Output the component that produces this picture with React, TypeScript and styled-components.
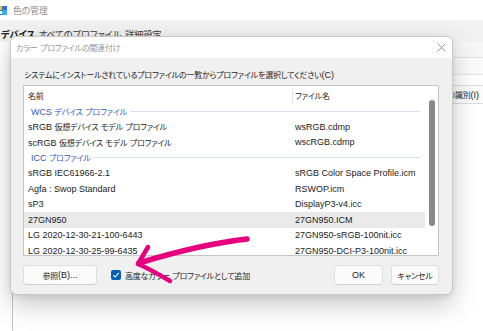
import * as React from 'react';
import styled, { createGlobalStyle } from 'styled-components';

const GlobalStyle = createGlobalStyle`
  html, body {
    margin: 0;
    padding: 0;
  }
  body {
    width: 483px;
    height: 331px;
    overflow: hidden;
    background: #ffffff;
    font-family: "Liberation Sans", "Noto Sans CJK JP", sans-serif;
    font-size: 9px;
    color: #1b1b1b;
  }
`;

interface Row {
  name: string;
  file?: string;
  group?: boolean;
  selected?: boolean;
}

const rows: Row[] = [
  { name: 'WCS デバイス プロファイル', group: true },
  { name: 'sRGB 仮想デバイス モデル プロファイル', file: 'wsRGB.cdmp' },
  { name: 'scRGB 仮想デバイス モデル プロファイル', file: 'wscRGB.cdmp' },
  { name: 'ICC プロファイル', group: true },
  { name: 'sRGB IEC61966-2.1', file: 'sRGB Color Space Profile.icm' },
  { name: 'Agfa : Swop Standard', file: 'RSWOP.icm' },
  { name: 'sP3', file: 'DisplayP3-v4.icc' },
  { name: '27GN950', file: '27GN950.ICM', selected: true },
  { name: 'LG 2020-12-30-21-100-6443', file: '27GN950-sRGB-100nit.icc' },
  { name: 'LG 2020-12-30-25-99-6435', file: '27GN950-DCI-P3-100nit.icc' }
];

// japanese runs are set a little smaller/tighter than latin, like Yu Gothic UI
const Cjk = styled('span')`
  font-family: "Noto Sans CJK JP", sans-serif;
  font-size: 0.89em;
  letter-spacing: -0.025em;
  font-feature-settings: "palt";
`;

const CJK_RE = /([\u3000-\u30ff\u3400-\u9fff\uff00-\uffef]+)/;

const T = ({ children }: { children: string }) => (
  <>{children.split(CJK_RE).map((part, i) => (i % 2 ? <Cjk key={i}>{part}</Cjk> : part))}</>
);

const Screen = styled('div')`
  position: relative;
  width: 483px;
  height: 331px;
  overflow: hidden;
  background: #ffffff;
`;

// background window
const TitleBar = styled('div')`
  height: 20px;
  display: flex;
  align-items: center;
  gap: 6px;
  font-size: 10px;
  color: #8d8d8d;
`;

const TabStrip = styled('div')`
  height: 22px;
  display: flex;
  align-items: flex-end;
  background: #f1f1f1;
`;

const Tab = styled('div')<{ active?: boolean }>`
  height: 12px;
  line-height: 12px;
  padding: 0 3px 2px 1px;
  font-size: 10.5px;
  font-weight: ${p => (p.active ? 700 : 400)};
  color: ${p => (p.active ? '#1b1b1b' : '#3a3a3a')};
`;

const Panel = styled('div')`
  margin-left: 12px;
  height: 289px;
  border-left: 1px solid #c4c4c4;
  background: #ffffff;
  display: flex;
  flex-direction: column;
`;

const PanelBand = styled('div')<{ tone: string; h: number }>`
  height: ${p => p.h}px;
  background: ${p => p.tone};
  border-bottom: 1px solid #e3e3e3;
`;

const PanelButtonRow = styled('div')`
  margin-top: 10px;
  display: flex;
  justify-content: flex-end;
  margin-right: -3px;
`;

const PanelButton = styled('div')`
  height: 17px;
  padding: 0 6px;
  display: flex;
  align-items: center;
  background: #fbfbfb;
  border: 1px solid #dcdcdc;
  border-radius: 3px;
  white-space: nowrap;
`;

// dialog
const Dialog = styled('div')`
  position: absolute;
  left: 10px;
  top: 36px;
  width: 443px;
  height: 259px;
  box-sizing: border-box;
  border: 1px solid #c8c8c8;
  border-radius: 7px;
  overflow: hidden;
  background: #f0f0f0;
  box-shadow: 0 10px 26px rgba(0, 0, 0, 0.22), 0 2px 6px rgba(0, 0, 0, 0.08);
  display: flex;
  flex-direction: column;
`;

const DialogTitle = styled('div')`
  height: 21px;
  flex: none;
  background: #ffffff;
  display: flex;
  align-items: center;
  justify-content: space-between;
  padding: 0 6px 0 5px;
  color: #959595;
`;

const DialogBody = styled('div')`
  flex: 1;
  display: flex;
  flex-direction: column;
  padding: 11px 13px 8px 12px;
`;

const Label = styled('div')`
  height: 12px;
  line-height: 12px;
  padding-left: 1px;
  white-space: nowrap;
`;

const ListBox = styled('div')`
  margin-top: 4px;
  height: 171px;
  box-sizing: border-box;
  border: 1px solid #c6c6c6;
  background: #ffffff;
  display: flex;
  overflow: hidden;
`;

const ListContent = styled('div')`
  flex: 1;
  display: flex;
  flex-direction: column;
  padding-top: 2px;
`;

const ListRow = styled('div')<{ selected?: boolean }>`
  flex: none;
  height: 15.5px;
  display: flex;
  align-items: center;
  white-space: nowrap;
  background: ${p => (p.selected ? '#eaeaea' : 'transparent')};
`;

const NameCell = styled('div')`
  width: 264px;
  padding-left: 4px;
  flex: none;
`;

const FileCell = styled('div')<{ header?: boolean }>`
  flex: 1;
  padding-left: 2px;
  align-self: stretch;
  display: flex;
  align-items: center;
  border-left: 1px solid ${p => (p.header ? '#e5e5e5' : 'transparent')};
`;

const GroupRow = styled('div')`
  flex: none;
  height: 15.5px;
  display: flex;
  align-items: center;
  gap: 3px;
  padding: 0 5px 0 7px;
  color: #2f5bc0;
  white-space: nowrap;
`;

const GroupLine = styled('div')`
  flex: 1;
  height: 1px;
  background: #d3e0f4;
`;

const ScrollTrack = styled('div')`
  width: 13px;
  flex: none;
  padding-top: 14px;
  display: flex;
  justify-content: center;
`;

const ScrollThumb = styled('div')`
  width: 6px;
  height: 126px;
  border-radius: 3px;
  background: #8a8a8a;
`;

const Footer = styled('div')`
  margin-top: 9px;
  display: flex;
  align-items: center;
`;

const Button = styled('div')<{ w: number }>`
  width: ${p => p.w}px;
  height: 20px;
  box-sizing: border-box;
  border: 1px solid #dedede;
  border-bottom-color: #cfcfcf;
  border-radius: 4px;
  background: #fbfbfb;
  display: flex;
  align-items: center;
  justify-content: center;
`;

const CheckWrap = styled('label')`
  margin-left: 14px;
  display: flex;
  align-items: center;
  gap: 4px;
  flex: 1;
`;

const Check = styled('span')`
  width: 10px;
  height: 10px;
  border-radius: 2px;
  background: #005fb8;
  display: flex;
  align-items: center;
  justify-content: center;
`;

const ButtonGroup = styled('div')`
  display: flex;
  gap: 8px;
`;

const Overlay = styled('svg')`
  position: absolute;
  left: 0;
  top: 0;
  pointer-events: none;
`;

const AppIcon = () => (
  <svg width="10" height="11" viewBox="0 0 10 11" style={{ marginLeft: -3 }}>
    <rect x="0" y="1" width="10" height="9" fill="#2f6fd6" />
    <rect x="0" y="1" width="5" height="4" fill="#f1c232" />
    <rect x="5" y="5" width="5" height="5" fill="#3bb0e8" />
    <rect x="2" y="6" width="3" height="3" fill="#ffffff" />
  </svg>
);

export default function App() {
  return (
    <Screen>
      <GlobalStyle />
      <TitleBar>
        <AppIcon />
        <span><T>色の管理</T></span>
      </TitleBar>
      <TabStrip>
        <Tab active><T>デバイス</T></Tab>
        <Tab><T>すべてのプロファイル</T></Tab>
        <Tab><T>詳細設定</T></Tab>
      </TabStrip>
      <Panel>
        <PanelBand tone="#f6f6f6" h={15} />
        <PanelBand tone="#fafafa" h={16} />
        <PanelButtonRow>
          <PanelButton><T>ディスプレイの識別(I)</T></PanelButton>
        </PanelButtonRow>
      </Panel>

      <Dialog>
        <DialogTitle>
          <span><T>カラー プロファイルの関連付け</T></span>
          <svg width="9" height="9" viewBox="0 0 9 9">
            <path d="M0.5 0.5 L8.5 8.5 M8.5 0.5 L0.5 8.5" stroke="#8a8a8a" strokeWidth="0.9" />
          </svg>
        </DialogTitle>
        <DialogBody>
          <Label>
            <T>システムにインストールされているプロファイルの一覧からプロファイルを選択してください(C)</T>
          </Label>
          <ListBox>
            <ListContent>
              <ListRow>
                <NameCell><T>名前</T></NameCell>
                <FileCell header><T>ファイル名</T></FileCell>
              </ListRow>
              {rows.map(row =>
                row.group ? (
                  <GroupRow key={row.name}>
                    <span><T>{row.name}</T></span>
                    <GroupLine />
                  </GroupRow>
                ) : (
                  <ListRow key={row.name} selected={row.selected}>
                    <NameCell><T>{row.name}</T></NameCell>
                    <FileCell>{row.file}</FileCell>
                  </ListRow>
                )
              )}
            </ListContent>
            <ScrollTrack>
              <ScrollThumb />
            </ScrollTrack>
          </ListBox>
          <Footer>
            <Button w={74}><T>参照(B)...</T></Button>
            <CheckWrap>
              <Check>
                <svg width="8" height="8" viewBox="0 0 8 8">
                  <path d="M1.3 4.2 L3.2 6 L6.8 1.9" stroke="#fff" strokeWidth="1.1" fill="none" />
                </svg>
              </Check>
              <span><T>高度なカラー プロファイルとして追加</T></span>
            </CheckWrap>
            <ButtonGroup>
              <Button w={49}>OK</Button>
              <Button w={48}><T>キャンセル</T></Button>
            </ButtonGroup>
          </Footer>
        </DialogBody>
      </Dialog>

      <Overlay width="483" height="331" viewBox="0 0 483 331">
        <g stroke="#e6007e" strokeLinecap="round" strokeLinejoin="round" fill="none">
          <path d="M247 239 C 220 242, 185 249, 139 263" strokeWidth="5.5" />
          <path d="M148 247 L 138 264" strokeWidth="4.5" />
          <path d="M138 264 C 150 269, 160 275, 170 281" strokeWidth="4.5" />
        </g>
      </Overlay>
    </Screen>
  );
}
